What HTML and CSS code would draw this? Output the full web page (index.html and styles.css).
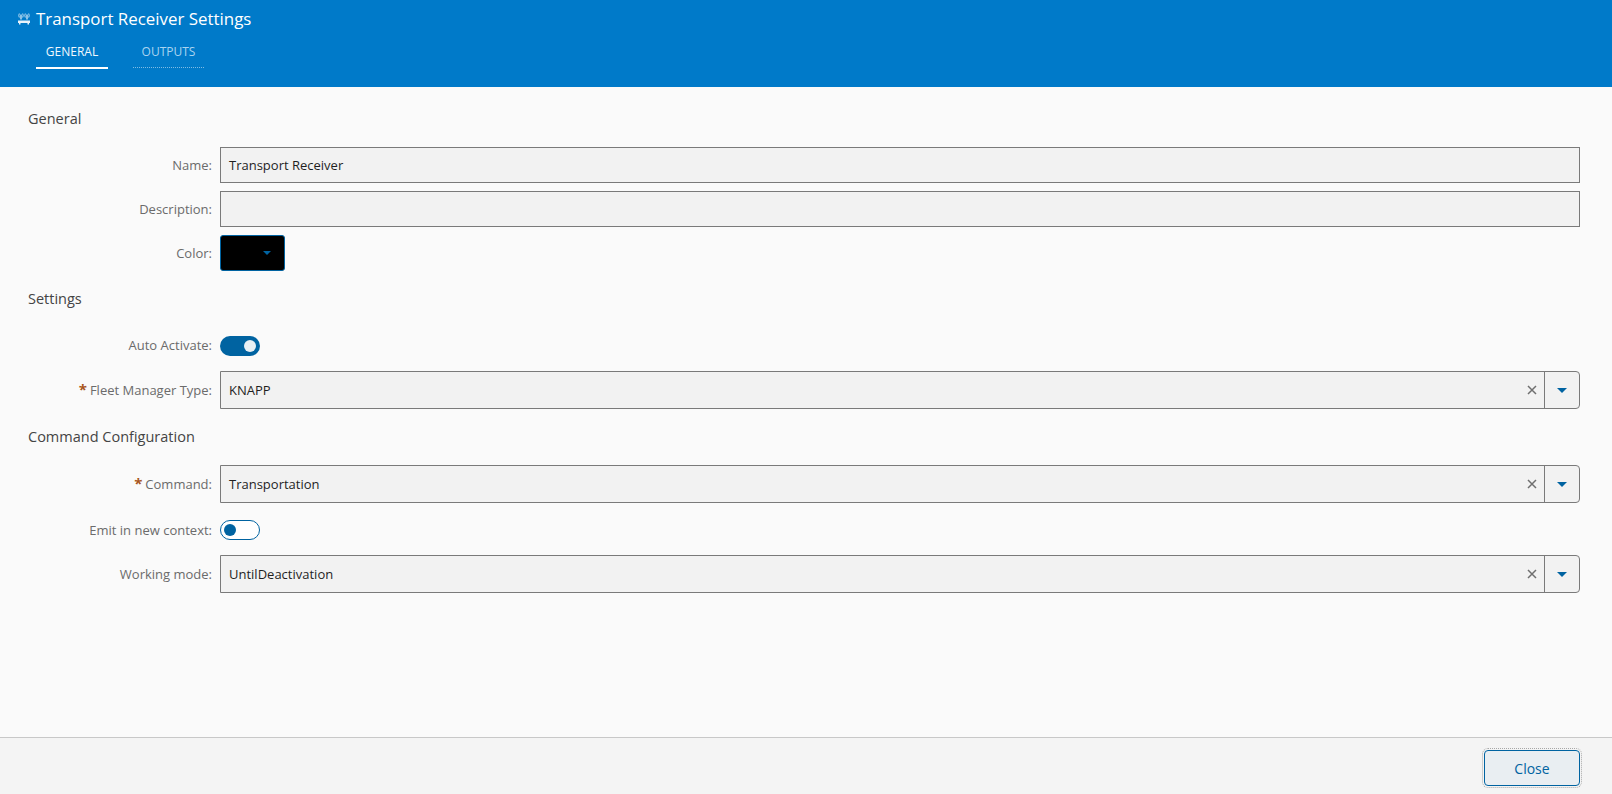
FILE: index.html
```html
<!DOCTYPE html>
<html lang="en">
<head>
<meta charset="utf-8">
<title>Transport Receiver Settings</title>
<link rel="stylesheet" href="styles.css">
</head>
<body>
<div class="page">
  <header class="header">
    <div class="title-row">
      <svg class="title-icon" viewBox="0 0 12 12" width="12" height="12" aria-hidden="true">
        <path class="ico" d="M0 7.500h12v2.500h-1v1.500H9.500V10h-7v1.500H1V10H0z"/>
        <path class="ico-line" d="M3 1.500v5M9 1.500v5"/>
        <path class="ico-arc" d="M1.300 .5Q.3 2.500 1.300 4.500M4.700 .5Q5.700 2.500 4.700 4.500M7.300 .5Q6.300 2.500 7.300 4.500M10.700 .5Q11.700 2.500 10.700 4.500"/>
      </svg>
      <span class="title">Transport Receiver Settings</span>
    </div>
    <nav class="tabs">
      <a class="tab tab-active">GENERAL</a>
      <a class="tab tab-idle">OUTPUTS</a>
    </nav>
  </header>

  <main class="content">
    <h2 class="section section-first">General</h2>
    <div class="row row-text"><label class="label">Name:</label><div class="input">Transport Receiver</div></div>
    <div class="row row-text"><label class="label">Description:</label><div class="input"></div></div>
    <div class="row row-color">
      <label class="label">Color:</label>
      <div class="color-picker"><span class="caret"></span></div>
    </div>

    <h2 class="section section-settings">Settings</h2>
    <div class="row row-toggle row-auto">
      <label class="label">Auto Activate:</label>
      <div class="toggle toggle-on"><span class="knob"></span></div>
    </div>
    <div class="row row-select">
      <label class="label"><span class="req">*</span>Fleet Manager Type:</label>
      <div class="select">
        <span class="select-value">KNAPP</span>
        <svg class="clear" viewBox="0 0 10 10" width="10" height="10" aria-hidden="true"><path d="M1 1l8 8M9 1l-8 8"/></svg>
        <span class="select-btn"><span class="caret"></span></span>
      </div>
    </div>

    <h2 class="section section-command">Command Configuration</h2>
    <div class="row row-select row-command">
      <label class="label"><span class="req">*</span>Command:</label>
      <div class="select">
        <span class="select-value">Transportation</span>
        <svg class="clear" viewBox="0 0 10 10" width="10" height="10" aria-hidden="true"><path d="M1 1l8 8M9 1l-8 8"/></svg>
        <span class="select-btn"><span class="caret"></span></span>
      </div>
    </div>
    <div class="row row-toggle row-emit">
      <label class="label">Emit in new context:</label>
      <div class="toggle toggle-off"><span class="knob"></span></div>
    </div>
    <div class="row row-select">
      <label class="label">Working mode:</label>
      <div class="select">
        <span class="select-value">UntilDeactivation</span>
        <svg class="clear" viewBox="0 0 10 10" width="10" height="10" aria-hidden="true"><path d="M1 1l8 8M9 1l-8 8"/></svg>
        <span class="select-btn"><span class="caret"></span></span>
      </div>
    </div>
  </main>

  <footer class="footer">
    <button class="close-btn" type="button">Close</button>
  </footer>
</div>
</body>
</html>
```

FILE: styles.css
```css
* { box-sizing: border-box; }
html, body { margin: 0; height: 100%; }
body {
  font-family: "Open Sans", "Liberation Sans", sans-serif;
  font-size: 13px;
  color: #1f1f1f;
  background: #fafafa;
  overflow: hidden;
}
.page { display: flex; flex-direction: column; height: 794px; }

.header { height: 87px; background: #007ac9; color: #fff; flex: none; padding: 9px 0 0 18px; }
.title-row { display: flex; align-items: center; gap: 6px; height: 20px; }
.title-icon { flex: none; }
.ico { fill: #e8f2fa; }
.ico-line { stroke: #e8f2fa; stroke-width: 1.200; fill: none; }
.ico-arc { stroke: #e8f2fa; stroke-width: .8; fill: none; }
.title { font-size: 16.900px; line-height: 20px; }
.tabs { display: flex; gap: 25px; margin: 10px 0 0 18px; }
.tab { width: 72px; height: 30px; line-height: 26px; font-size: 12px; text-align: center; }
.tab-active { border-bottom: 2px solid #fff; color: #f0f8fd; font-weight: 400; }
.tab-idle { width: 71px; border-bottom: 1px dotted #7fbce4; color: #a9d4f0; height: 29px; }

.content { flex: 1; padding: 0 32px 0 28px; }
.section { margin: 0; font-weight: 400; font-size: 14.500px; line-height: 18px; color: #444; }
.section-first { padding-top: 23px; height: 60px; }
.section-settings { margin-top: 19px; height: 46px; }
.section-command { margin-top: 19px; height: 37px; }

.row { display: flex; align-items: center; gap: 8px; }
.row-text { height: 36px; margin-bottom: 8px; }
.row-color { height: 36px; }
.row-auto { height: 20px; margin-bottom: 15px; }
.row-auto .label { padding-bottom: 2px; }
.row-select { height: 38px; }
.row-emit { height: 20px; margin-top: 17px; margin-bottom: 15px; }
.label { width: 184px; text-align: right; font-size: 13px; color: #6b6b6b; flex: none; }
.req { color: #a8561c; font-weight: 700; font-size: 15px; line-height: 12px; margin-right: 3px; }

.input {
  flex: 1; height: 36px; background: #f2f2f2; border: 1px solid #7a7a7a;
  padding: 0 8px; line-height: 34px; font-size: 13px; color: #1f1f1f;
}
.color-picker {
  width: 65px; height: 36px; background: #000; border: 1px solid #0063a1;
  border-radius: 3px; display: flex; align-items: center; justify-content: center;
  padding-left: 28px;
}
.caret { width: 0; height: 0; border-left: 5px solid transparent; border-right: 5px solid transparent; border-top: 5px solid #0063a1; display: block; }
.color-picker .caret { border-left-width: 4px; border-right-width: 4px; border-top-width: 4px; }

.toggle { width: 40px; height: 20px; border-radius: 10px; position: relative; flex: none; }
.toggle-on { background: #0063a1; }
.toggle-off { background: #fff; border: 1px solid #0063a1; }
.knob { position: absolute; width: 12px; height: 12px; border-radius: 50%; top: 4px; }
.toggle-on .knob { right: 4px; background: #e8eff4; }
.toggle-off .knob { left: 3px; top: 3px; background: #0063a1; }

.select {
  flex: 1; height: 38px; background: #f2f2f2; border: 1px solid #7a7a7a;
  border-radius: 0 4px 4px 0; display: flex; align-items: center; padding-left: 8px;
}
.select-value { flex: 1; font-size: 13px; color: #1f1f1f; }
.clear { flex: none; margin-right: 7px; }
.clear path { stroke: #6f6f6f; stroke-width: 1.500; fill: none; }
.select-btn { width: 35px; height: 100%; border-left: 1px solid #7a7a7a; display: flex; align-items: center; justify-content: center; flex: none; }

.footer {
  flex: none; height: 57px; background: #f4f4f4; border-top: 1px solid #c8c8c8;
  display: flex; justify-content: flex-end; align-items: flex-start;
  padding: 12px 32px 0 0;
}
.close-btn {
  width: 96px; height: 36px; background: #e9eef2; border: 1px solid #0063a1; border-radius: 4px;
  outline: 1px dotted #a8a8a8; outline-offset: 1px;
  font-family: inherit; font-size: 14px; color: #0063a1; padding: 0;
}
```
